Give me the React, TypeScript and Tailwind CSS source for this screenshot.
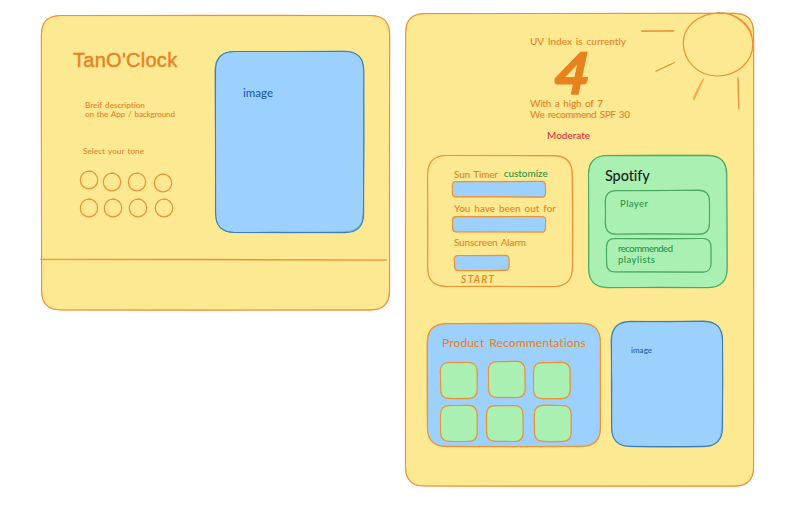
import { useLayoutEffect, useRef, type ReactNode } from "react";
import { clsx } from "clsx";

type Tone = "orange" | "blue" | "green";

const STROKES: Record<Tone, string> = {
  orange: "stroke-[#ee9233]",
  blue: "stroke-[#3a80be]",
  green: "stroke-[#4bab60]",
};

// Small repeatable offset so that every frame wobbles in its own way.
function wobble(seed: number, i: number, amount: number) {
  const v = Math.sin(seed * 12.9898 + i * 78.233) * 43758.5453;
  return (v - Math.floor(v) - 0.5) * 2 * amount;
}

function roughRect(w: number, h: number, seed: number, amount: number) {
  const r = Math.min(19, Math.min(w, h) * 0.25);
  const j = (i: number) => wobble(seed, i, amount);
  return [
    `M${r} ${j(1)}`,
    `Q${w / 2} ${j(2) * 2} ${w - r} ${j(3)}`,
    `Q${w + j(4)} ${j(3)} ${w + j(4)} ${r}`,
    `Q${w + j(5) * 2} ${h / 2} ${w + j(6)} ${h - r}`,
    `Q${w + j(6)} ${h + j(7)} ${w - r} ${h + j(7)}`,
    `Q${w / 2} ${h + j(8) * 2} ${r} ${h + j(9)}`,
    `Q${j(10)} ${h + j(9)} ${j(10)} ${h - r}`,
    `Q${j(11) * 2} ${h / 2} ${j(12)} ${r}`,
    `Q${j(12)} ${j(1)} ${r} ${j(1)}Z`,
  ].join(" ");
}

function Frame({ w, h, seed, tone, fill, rough = 0.6, className, children }: {
  w: number; h: number; seed: number; tone: Tone; fill: string; rough?: number; className: string; children?: ReactNode;
}) {
  return (
    <div className={clsx("relative shrink-0", className)}>
      <svg className="absolute inset-0 overflow-visible" width={w} height={h}>
        <g transform="translate(.5 .5)">
          <path d={roughRect(w, h, seed, 0.15)} className={clsx(fill, STROKES[tone])} strokeWidth="1.1" />
          <path d={roughRect(w, h, seed + 5, rough)} fill="none" className={STROKES[tone]} strokeWidth="0.9" strokeOpacity="0.55" />
        </g>
      </svg>
      <div className="relative flow-root h-full">{children}</div>
    </div>
  );
}

// A handwritten caption, its letters spread over the given width.
function Label({ children, w, className }: { children: string; w: number; className: string }) {
  const ref = useRef<HTMLSpanElement>(null);
  useLayoutEffect(() => {
    const el = ref.current;
    if (!el) return;
    el.style.letterSpacing = "0px";
    const natural = el.getBoundingClientRect().width;
    el.style.letterSpacing = `${(w - natural) / Math.max(1, children.length - 1)}px`;
  }, [w, children]);
  return (
    <div className={clsx("flex whitespace-nowrap font-[Lato,sans-serif] font-medium [word-spacing:0.14em]", className)}>
      <span ref={ref}>{children}</span>
    </div>
  );
}

function Swatch({ className }: { className: string }) {
  return (
    <svg className={clsx("size-[18px] shrink-0 overflow-visible", className)} viewBox="0 0 18 18" fill="none" stroke="#ee9233">
      <ellipse cx="9" cy="9" rx="8.7" ry="8.8" strokeWidth="1.2" />
      <path d="M8 .4Q10-.2 11.5.1" strokeWidth=".8" />
    </svg>
  );
}

const YELLOW = "fill-[#fee993]";
const BLUE = "fill-[#9dd1fd]";
const GREEN = "fill-[#aaf0b3]";

function Landing() {
  return (
    <Frame w={348} h={294.5} seed={1} tone="orange" fill={YELLOW} rough={0.4} className="mt-[15px] ml-[41px] h-[295px] w-[348px]">
      <div className="flex h-[244px]">
        <div className="w-[174px] pt-[33px]">
          <h1 className="ml-[32px] font-['Liberation_Sans',sans-serif] text-[20px] leading-[24px] tracking-[0.28px] text-[#e8821e] [-webkit-text-stroke:0.4px_#e8821e]">TanO'Clock</h1>
          <div className="mt-[29px] ml-11 text-[8.2px] leading-[9px] text-[#e8821e]">
            <Label w={60} className="">Breif description</Label>
            <Label w={90} className="">on the App / background</Label>
          </div>
          <Label w={61} className="mt-[28px] ml-[42px] text-[8.2px] leading-[9px] text-[#e8821e]">Select your tone</Label>
          <div className="mt-[15px] ml-[39px] flex h-7">
            <Swatch className="" />
            <Swatch className="mt-[2px] ml-[5px]" />
            <Swatch className="mt-[2px] ml-[7px]" />
            <Swatch className="mt-[3px] ml-[8px]" />
          </div>
          <div className="ml-[39px] flex">
            <Swatch className="" />
            <Swatch className="ml-[6px]" />
            <Swatch className="ml-[7px]" />
            <Swatch className="ml-[8px]" />
          </div>
        </div>
        <Frame w={148.3} h={181} seed={2} tone="blue" fill={BLUE} rough={0.8} className="mt-[36px] h-[181px] w-[148px]">
          <Label w={30} className="mt-[35px] ml-[28px] text-[11.5px] leading-[14px] text-[#195eb5]">image</Label>
        </Frame>
      </div>
      <svg className="-ml-[1px] block overflow-visible" width="347" height="3" fill="none" stroke="#ee9233">
        <path d="M0 .2 150 .4 347 1" strokeWidth="1.1" />
        <path d="M1 .7 170 1 346 1.3" strokeWidth=".9" strokeOpacity=".6" />
      </svg>
    </Frame>
  );
}

function Sun() {
  return (
    <svg className="absolute top-[-1px] left-[236px] overflow-visible" width="113" height="100" viewBox="641 12 113 100" fill="none" stroke="#ee9233" strokeLinecap="round">
      <path d="M717 12.6C737 12.2 752.5 27 752.8 44C753 62 737 76 717 76C698 75.8 683.3 61 683.3 43C683.3 27 698 13.2 720 12.8C735 12.7 749 23 752 36" strokeWidth="1.2" />
      <path d="M641.5 30.8 673.5 31.2M642 31.5 673.5 30.6M656 71 674.5 62.5M656 71 673.5 63.2M738 77 738.8 109M738 79 738.6 108" />
      <path d="M702.8 79.5 693.2 98M703.5 79 694 100M702.3 82 694 99" strokeWidth="1.1" strokeOpacity=".75" />
    </svg>
  );
}

function Timer() {
  return (
    <Frame w={145} h={131} seed={3} tone="orange" fill="fill-none" className="h-[131px] w-[145px]">
      <div className="pt-[13px] pl-[27px] text-[10px] leading-[12px] text-[#e8821e]">
        <div className="flex gap-[6px]">
          <Label w={44} className="">Sun Timer</Label>
          <Label w={44} className="-mt-[1px] mb-[1px] text-[#2b9444]">customize</Label>
        </div>
        <Frame w={93} h={15.5} seed={4} tone="orange" fill={BLUE} className="-ml-[2px] mt-[1px] h-[16px] w-[93px]" />
        <Label w={102} className="mt-[5px]">You have been out for</Label>
        <Frame w={93} h={15.5} seed={6} tone="orange" fill={BLUE} className="-ml-[2px] mt-[2px] h-[16px] w-[93px]" />
        <Label w={72} className="mt-[4px]">Sunscreen Alarm</Label>
        <Frame w={54.5} h={15} seed={7} tone="orange" fill={BLUE} className="mt-[7px] h-[15px] w-[54px]" />
        <Label w={33} className="mt-[3px] ml-[7px] text-[10.5px] italic">START</Label>
      </div>
    </Frame>
  );
}

function Spotify() {
  return (
    <Frame w={138.5} h={132} seed={8} tone="green" fill={GREEN} rough={0.8} className="h-[132px] w-[139px]">
      <Label w={45} className="mt-[12px] ml-[17px] text-[14.5px] leading-[18px] text-[#1e1e1e]">Spotify</Label>
      <Frame w={104} h={43.5} seed={9} tone="green" fill="fill-none" rough={0.8} className="mt-[5px] ml-[17px] h-[43px] w-[104px]">
        <Label w={28} className="mt-[8px] ml-[15px] text-[9.5px] leading-[12px] text-[#2b9444]">Player</Label>
      </Frame>
      <Frame w={104.5} h={33.5} seed={11} tone="green" fill="fill-none" rough={0.8} className="mt-[5px] ml-[18px] h-[34px] w-[105px]">
        <div className="pt-[5px] pl-[12px] text-[9.5px] leading-[11px] text-[#2b9444]">
          <Label w={55} className="">recommended</Label>
          <Label w={37} className="">playlists</Label>
        </div>
      </Frame>
    </Frame>
  );
}

const TILES = [
  { seed: 12, place: "" },
  { seed: 13, place: "ml-[48px] -mt-[1px]" },
  { seed: 14, place: "ml-[93px]" },
  { seed: 15, place: "" },
  { seed: 16, place: "ml-[46px]" },
  { seed: 17, place: "ml-[94px]" },
];

function Products() {
  return (
    <Frame w={173} h={123} seed={18} tone="orange" fill={BLUE} rough={0.8} className="mt-[2px] h-[123px] w-[173px]">
      <Label w={144} className="mt-[13px] ml-[15px] text-[12px] leading-[14px] text-[#e8821e]">Product Recommentations</Label>
      <div className="mt-[12px] ml-[13px] grid grid-cols-1 gap-y-[7px]">
        {[0, 3].map((start) => (
          <div key={start} className="grid h-[36px]">
            {TILES.slice(start, start + 3).map((t) => (
              <Frame key={t.seed} w={36.6} h={36} seed={t.seed} tone="orange" fill={GREEN} className={clsx("col-start-1 row-start-1 size-[36px]", t.place)} />
            ))}
          </div>
        ))}
      </div>
    </Frame>
  );
}

function Dashboard() {
  return (
    <Frame w={348} h={472.5} seed={19} tone="orange" fill={YELLOW} rough={0.4} className="mt-[13px] ml-[16px] h-[473px] w-[348px]">
      <Sun />
      <div className="ml-[125px] pt-[22px] text-[10px] leading-[12px] text-[#e8821e]">
        <Label w={96} className="">UV Index is currently</Label>
        <div className="mt-[1px] ml-[27px] h-[49px] origin-left -skew-x-12 font-[Lato,sans-serif] text-[55px] leading-[49px] font-normal [-webkit-text-stroke:3.5px_#e8821e] [stroke-linejoin:round]">4</div>
        <div className="mt-[1px] leading-[11px]">
          <Label w={73} className="">With a high of 7</Label>
          <Label w={100} className="">We recommend SPF 30</Label>
        </div>
        <Label w={43} className="mt-[9px] ml-[17px] text-[#e02f40]">Moderate</Label>
      </div>
      <div className="mt-[14px] ml-[22px] flex gap-[16px]">
        <Timer />
        <Spotify />
      </div>
      <div className="mt-[34px] ml-[22px] flex gap-[11px]">
        <Products />
        <Frame w={111} h={125} seed={20} tone="blue" fill={BLUE} rough={0.8} className="h-[125px] w-[111px]">
          <Label w={21} className="mt-[25px] ml-[20px] text-[8px] leading-[9px] text-[#195eb5]">image</Label>
        </Frame>
      </div>
    </Frame>
  );
}

export default function App() {
  return (
    <main className="flex h-[523px] w-[802px] items-start overflow-hidden bg-white">
      <Landing />
      <Dashboard />
    </main>
  );
}
